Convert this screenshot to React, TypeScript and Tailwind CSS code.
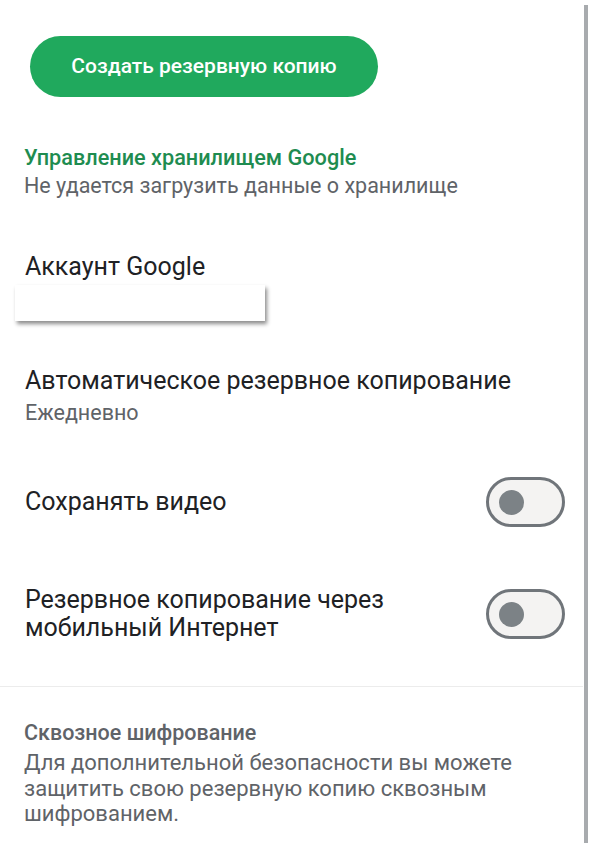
import React from 'react';

const Toggle: React.FC = () => (
    <div className="w-[79px] h-[50px] shrink-0 rounded-full border-[3px] border-[#70757a] bg-[#f4f3f2] flex items-center pl-[10px]">
        <div className="w-[25px] h-[25px] rounded-full bg-[#7c8286]" />
    </div>
);

export default function App() {
    return (
        <div className="relative w-[590px] h-[843px] bg-white overflow-hidden font-['Roboto',sans-serif]">
            {/* scrollbar */}
            <div className="absolute right-[2px] top-[5px] bottom-0 w-[4px] bg-[#a8abae]" />

            <div className="w-[583px] flex flex-col">
                <div className="pt-[36px] pl-[30px]">
                    <button className="h-[61px] w-[348px] rounded-full bg-[#20a95d] text-white text-[21px] font-medium">
                        Создать резервную копию
                    </button>
                </div>

                <div className="pl-[24px] pt-[46px]">
                    <div className="text-[21.7px] leading-[29px] font-medium text-[#1e8c50]">Управление хранилищем Google</div>
                    <div className="text-[21.5px] leading-[28px] text-[#5f6368]">Не удается загрузить данные о хранилище</div>
                </div>

                <div className="pt-[51px]">
                    <div className="pl-[25px] text-[25px] leading-[32px] text-[#202124]">Аккаунт Google</div>
                    <div className="ml-[15px] mt-[2px] w-[250px] h-[36px] bg-white shadow-[2px_3px_4px_rgba(0,0,0,0.45)]" />
                </div>

                <div className="pl-[25px] pt-[44px]">
                    <div className="text-[25px] leading-[32px] text-[#202124]">Автоматическое резервное копирование</div>
                    <div className="mt-[1px] text-[21.5px] leading-[30px] text-[#5f6368]">Ежедневно</div>
                </div>

                <div className="pl-[25px] pr-[18px] pt-[49px] flex items-center justify-between">
                    <div className="text-[25px] leading-[28px] text-[#202124]">Сохранять видео</div>
                    <Toggle />
                </div>

                <div className="pl-[25px] pr-[18px] pt-[59px] flex items-center justify-between">
                    <div className="text-[25px] leading-[28px] text-[#202124]">
                        Резервное копирование через
                        <br />
                        мобильный Интернет
                    </div>
                    <Toggle />
                </div>

                <div className="mt-[44px] h-px bg-[#ececec]" />

                <div className="pl-[24px] pt-[31px] pr-[40px]">
                    <div className="text-[21.5px] leading-[30px] font-medium text-[#5f6368]">Сквозное шифрование</div>
                    <div className="mt-[2px] text-[22px] leading-[25.5px] text-[#5f6368]">
                        Для дополнительной безопасности вы можете защитить свою резервную копию сквозным шифрованием.
                    </div>
                </div>
            </div>
        </div>
    );
}
